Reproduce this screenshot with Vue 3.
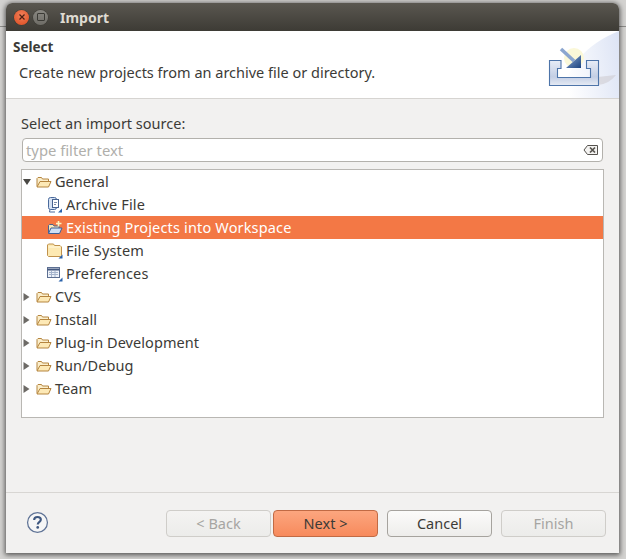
<script setup>
const rows = [
  { label: 'General', level: 0, icon: 'open', twisty: 'down' },
  { label: 'Archive File', level: 1, icon: 'archive' },
  { label: 'Existing Projects into Workspace', level: 1, icon: 'project', selected: true },
  { label: 'File System', level: 1, icon: 'folder' },
  { label: 'Preferences', level: 1, icon: 'prefs' },
  { label: 'CVS', level: 0, icon: 'open', twisty: 'right' },
  { label: 'Install', level: 0, icon: 'open', twisty: 'right' },
  { label: 'Plug-in Development', level: 0, icon: 'open', twisty: 'right' },
  { label: 'Run/Debug', level: 0, icon: 'open', twisty: 'right' },
  { label: 'Team', level: 0, icon: 'open', twisty: 'right' }
]
</script>

<template>
  <div class="desktop">
    <div class="line"></div>
    <div class="window">
      <div class="titlebar">
        <span class="close"><svg width="10" height="10" viewBox="0 0 10 10"><path d="M2.5 2.5l5 5M7.5 2.5l-5 5" stroke="#4a2012" stroke-width="1.2"/></svg></span>
        <span class="max"><span class="max-box"></span></span>
        <span class="title">Import</span>
      </div>

      <div class="banner">
        <div class="banner-text">
          <div class="banner-title">Select</div>
          <div class="banner-desc">Create new projects from an archive file or directory.</div>
        </div>
        <svg class="banner-art" width="84" height="67" viewBox="0 0 84 67">
          <defs>
            <linearGradient id="swoosh" x1="0" y1="0.3" x2="1" y2="0.1">
              <stop offset="0" stop-color="#ffffff"/>
              <stop offset="1" stop-color="#dde4f5"/>
            </linearGradient>
            <linearGradient id="tray" x1="0" y1="0" x2="0" y2="1">
              <stop offset="0" stop-color="#e8edf7"/>
              <stop offset="0.65" stop-color="#c3cee4"/>
              <stop offset="1" stop-color="#e6ebf4"/>
            </linearGradient>
            <linearGradient id="arrow" x1="0" y1="0" x2="1" y2="1">
              <stop offset="0" stop-color="#8eaad3"/>
              <stop offset="1" stop-color="#1b437f"/>
            </linearGradient>
          </defs>
          <path d="M26 67C30 38 52 12 84 0V67Z" fill="url(#swoosh)"/>
          <path d="M63 46L81 44Q74 53 63 54Z" fill="#c9c5c9" opacity=".5"/>
          <circle cx="39" cy="27" r="10" fill="#fbf8d8"/>
          <path d="M14.500 29.500H26V37.500H22.500V46.500H55.500V37.500H51.500V29.500H63.500V54.500H14.500Z" fill="url(#tray)" stroke="#4d74a9" stroke-width="1.100"/>
          <path d="M26 18L39 30" stroke="#8ba6cf" stroke-width="3.500"/>
          <path d="M46 24V37H31Z" fill="url(#arrow)"/>
        </svg>
      </div>

      <div class="content">
        <div class="prompt">Select an import source:</div>
        <div class="filter">
          <span class="placeholder">type filter text</span>
          <svg width="16" height="12" viewBox="0 0 16 12">
            <path d="M4.500 1.500H14.500V10.500H4.500L1 6Z" fill="#f4f3f1" stroke="#55524e"/>
            <path d="M7 3.500l5 5M12 3.500l-5 5" stroke="#55524e" stroke-width="1.700"/>
          </svg>
        </div>
        <div class="tree">
          <div v-for="row in rows" :key="row.label" class="row" :class="{ selected: row.selected, child: row.level === 1 }">
            <svg v-if="row.twisty === 'down'" class="twisty" width="10" height="10" viewBox="0 0 10 10"><path d="M1 2H9L5 8Z" fill="#4a4844"/></svg>
            <svg v-else-if="row.twisty === 'right'" class="twisty" width="10" height="10" viewBox="0 0 10 10"><path d="M1.500 1L7.500 5L1.500 9Z" fill="#6d6a66"/></svg>

            <svg v-if="row.icon === 'open'" class="icon" width="16" height="16" viewBox="0 0 16 16">
              <path d="M1 12.500V4.500L2 3.500H5.500L6.500 5H12.500V7" fill="#fbeecb" stroke="#b5853f"/>
              <path d="M1 13L4 7.500H15L12.500 13Z" fill="#fde9b6" stroke="#b5853f" stroke-linejoin="round"/>
            </svg>
            <svg v-else-if="row.icon === 'archive'" class="icon" width="16" height="16" viewBox="0 0 16 16">
              <rect x="1.500" y="0.500" width="8" height="12" rx="2" fill="#d5e1f2" stroke="#4a6a9c"/>
              <rect x="5.500" y="2.500" width="6" height="8" fill="#fff" stroke="#47628f"/>
              <path d="M7 5.500h3M7 7.500h2" stroke="#7d8da8"/>
              <path d="M3 12.500L2.500 15H8" stroke="#4a6a9c" fill="none"/>
              <path d="M15 11.500V15.500H11Z" fill="#2b63ab"/>
            </svg>
            <svg v-else-if="row.icon === 'project'" class="icon" width="16" height="16" viewBox="0 0 16 16">
              <path d="M1.500 13V5.500L2.500 4.500H6L7 6H12V8" fill="#f8e6b5" stroke="#49628f"/>
              <path d="M1.500 13.500L4 8H15L12.500 13.500Z" fill="#cfe0f6" stroke="#3d5f98" stroke-linejoin="round"/>
              <path d="M11.500 1V6.500M9 3.500H14.500" stroke="#fbf3c2" stroke-width="1.600"/>
            </svg>
            <svg v-else-if="row.icon === 'folder'" class="icon" width="16" height="16" viewBox="0 0 16 16">
              <path d="M0.500 12.500V2L1.500 1H6.500L7.500 2.500H13L14.500 4V12.500L13.500 13.500H1.500Z" fill="#fde9b2" stroke="#c0924c"/>
              <path d="M1.500 4H13.500" stroke="#fff8df"/>
              <path d="M15.500 11.500V15.500H11.500Z" fill="#2b63ab"/>
            </svg>
            <svg v-else class="icon" width="16" height="16" viewBox="0 0 16 16">
              <rect x="0.500" y="1.500" width="12" height="10" fill="#eef2f9" stroke="#5c6f92"/>
              <path d="M0.500 3.500H12.500" stroke="#44587f" stroke-width="2"/>
              <path d="M2 6.500H11M2 8.500H11M4.500 5V11M8 5V11" stroke="#a5b4cc"/>
              <path d="M15.500 11.500V15.500H11.500Z" fill="#2b63ab"/>
            </svg>
            <span class="label">{{ row.label }}</span>
          </div>
        </div>
      </div>

      <div class="footer">
        <svg class="help" width="23" height="23" viewBox="0 0 22 22">
          <circle cx="11" cy="11" r="9.500" fill="#f6f6f6" stroke="#5f7396" stroke-width="1.200"/>
          <path d="M7.800 8.500C7.800 6.500 9.300 5.800 11 5.800C12.900 5.800 14.200 6.800 14.200 8.400C14.200 10.400 11.200 10.400 11.200 13" fill="none" stroke="#3f5880" stroke-width="2"/>
          <circle cx="11.200" cy="15.700" r="1.300" fill="#3f5880"/>
        </svg>
        <div class="buttons">
          <div class="nav">
            <button class="btn" disabled><span class="btn-text">&lt; Back</span></button>
            <button class="btn primary"><span class="btn-text">Next &gt;</span></button>
          </div>
          <button class="btn"><span class="btn-text">Cancel</span></button>
          <button class="btn" disabled><span class="btn-text">Finish</span></button>
        </div>
      </div>
    </div>
  </div>
</template>

<style>
html, body { margin: 0; background: #c9c8c6; }
</style>

<style scoped>
.desktop {
  position: relative;
  box-sizing: border-box;
  width: 626px;
  height: 559px;
  padding: 3px 7px 6px 6px;
  overflow: hidden;
  background: #d3d2d0;
  font-family: "Noto Sans", sans-serif;
  font-size: 14.5px;
  color: #3c3b37;
}
.line {
  position: absolute;
  left: 0;
  right: 0;
  top: 26px;
  height: 1px;
  background: #8d8c8a;
}
.window {
  position: relative;
  display: flex;
  flex-direction: column;
  height: 550px;
  background: #f2f1f0;
  border-radius: 6px 6px 0 0;
  box-shadow: 0 1px 5px 1px rgba(0, 0, 0, 0.6);
}
.titlebar {
  display: flex;
  align-items: center;
  box-sizing: border-box;
  height: 28px;
  padding-left: 8px;
  flex: none;
  border-radius: 6px 6px 0 0;
  background: linear-gradient(#5a5750, #3d3b35);
}
.close, .max {
  display: flex;
  align-items: center;
  justify-content: center;
  width: 15px;
  height: 15px;
  border-radius: 50%;
}
.close {
  background: radial-gradient(circle at 50% 35%, #f0805a, #dc4a1e);
  box-shadow: 0 0 0 .5px #3d3b35;
}
.max {
  margin-left: 4px;
  background: linear-gradient(#8a8882, #6e6c66);
  box-shadow: 0 0 0 .5px #3d3b35;
}
.max-box {
  box-sizing: border-box;
  width: 8px;
  height: 8px;
  border: 1px solid #3b3a35;
  border-radius: 1px;
}
.title {
  margin-left: 12px;
  color: #dfdbd2;
  font-weight: 700;
  font-size: 14px;
}
.banner {
  display: flex;
  justify-content: space-between;
  flex: none;
  box-sizing: border-box;
  height: 68px;
  background: #fff;
  border-bottom: 1px solid #d6d4d1;
}
.banner-text { padding: 7px 0 0 7px; }
.banner-title {
  font-size: 13.500px;
  font-weight: 700;
  line-height: 18px;
}
.banner-desc {
  margin: 6px 0 0 6px;
  line-height: 20px;
}
.banner-art { flex: none; }
.content {
  display: flex;
  flex-direction: column;
  flex: none;
  box-sizing: border-box;
  height: 394px;
  padding: 14px 15px 0;
  border-bottom: 1px solid #d8d6d3;
}
.prompt {
  line-height: 20px;
}
.filter {
  display: flex;
  align-items: center;
  justify-content: space-between;
  box-sizing: border-box;
  height: 24px;
  margin: 5px 1px 0;
  padding: 0 3px 0 3px;
  background: #fff;
  border: 1px solid #b3b1ac;
  border-radius: 4px;
}
.placeholder {
  color: #b0afab;
  font-size: 14.800px;
  line-height: 20px;
}
.tree {
  box-sizing: border-box;
  height: 249px;
  margin-top: 7px;
  background: #fff;
  border: 1px solid #b9b7b3;
}
.row {
  display: flex;
  align-items: center;
  height: 23px;
  padding-left: 0;
  letter-spacing: 0.06px;
}
.row.child { padding-left: 25px; letter-spacing: 0.16px; }
.row.selected {
  background: #f37845;
  color: #fff;
}
.twisty { margin-right: 4px; flex: none; }
.icon { flex: none; }
.label { margin-left: 3px; white-space: nowrap; position: relative; top: -1px; }
.footer {
  display: flex;
  align-items: flex-start;
  justify-content: space-between;
  flex: none;
  height: 60px;
  padding: 17px 13px 0 20px;
}
.help { margin-top: 1px; }
.buttons { display: flex; gap: 9px; }
.nav { display: flex; gap: 2px; }
.btn {
  box-sizing: border-box;
  width: 105px;
  height: 27px;
  padding: 0;
  font: inherit;
  color: #3c3b37;
  background: linear-gradient(#fbfbfa, #eeedeb);
  border: 1px solid #a6a39e;
  border-radius: 4px;
}
.btn-text { position: relative; top: -1px; }
.btn:disabled {
  color: #a6a5a2;
  background: linear-gradient(#f4f3f2, #ececea);
  border-color: #cfcdc9;
}
.btn.primary {
  background: linear-gradient(#fca67f, #f78a5c);
  border-color: #c16a44;
}
</style>
